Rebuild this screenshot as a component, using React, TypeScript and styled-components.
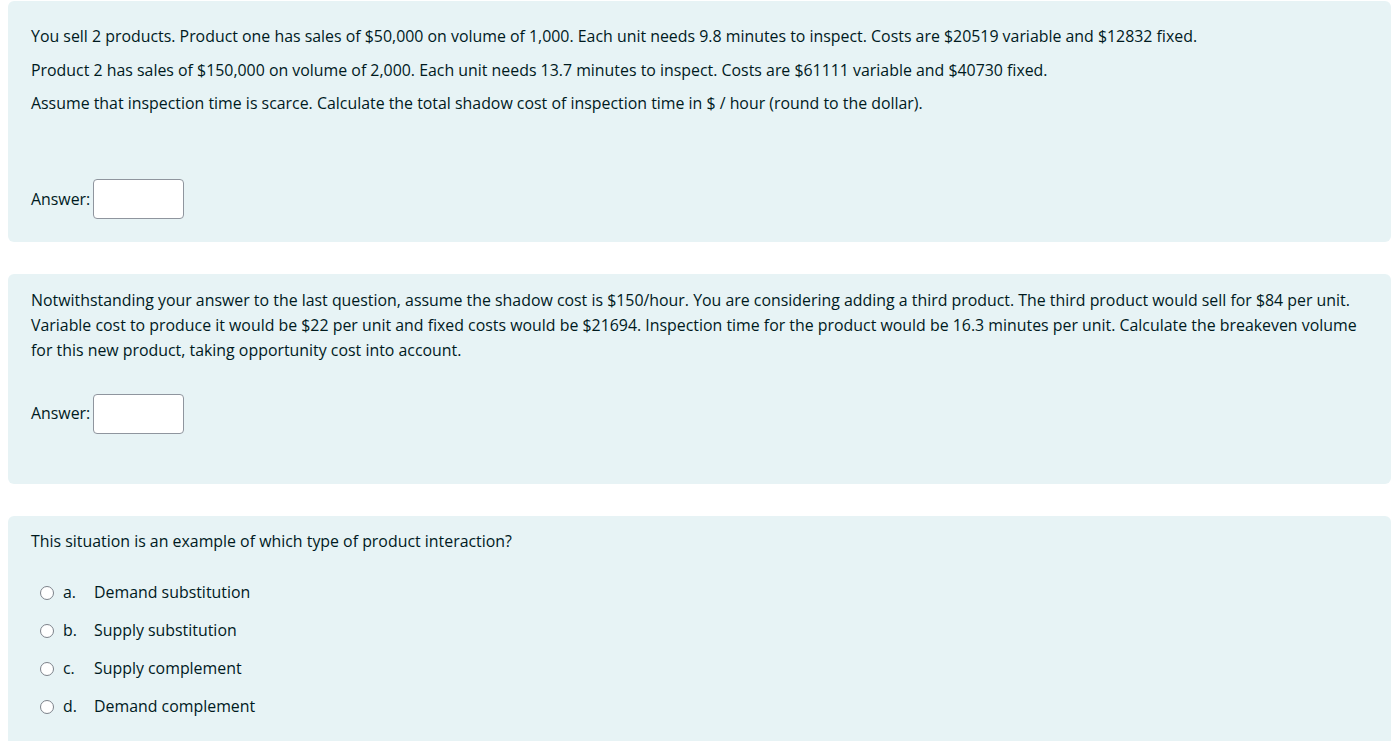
import styled, { createGlobalStyle } from "styled-components"

const GlobalStyle = createGlobalStyle`
  html, body {
    margin: 0;
    padding: 0;
    background: #ffffff;
  }
  body {
    font-family: "Open Sans", "Noto Sans", sans-serif;
    font-size: 15.9px;
    color: #001a1e;
  }
`

const Page = styled.div`
  padding: 1px 2px 0 8px;
  display: flex;
  flex-direction: column;
  gap: 32px;
`

const Card = styled.div<{ $pad: string }>`
  background-color: #e7f3f5;
  border-radius: 6px;
  padding: ${(p) => p.$pad};
`

const Para = styled.p`
  margin: 0 0 8.5px;
  line-height: 25px;
  &:last-child {
    margin-bottom: 0;
  }
`

const QText = styled.div<{ $gap: number }>`
  margin-bottom: ${(p) => p.$gap}px;
`

const AnswerRow = styled.div`
  display: flex;
  align-items: center;
  gap: 3px;
`

const AnswerLabel = styled.label`
  line-height: 25px;
`

const AnswerInput = styled.input`
  width: 91px;
  height: 40px;
  box-sizing: border-box;
  border: 1px solid #8f959e;
  border-radius: 4px;
  background: #ffffff;
  padding: 6px 8px;
  font: inherit;
  &:focus {
    outline: none;
  }
`

const Options = styled.div`
  display: flex;
  flex-direction: column;
  gap: 13px;
  padding-left: 9px;
`

const Option = styled.label`
  display: flex;
  align-items: center;
  line-height: 25px;
`

const Radio = styled.span`
  width: 14px;
  height: 14px;
  box-sizing: border-box;
  border: 1px solid #7d828a;
  border-radius: 50%;
  background: #ffffff;
  margin-right: 9px;
`

const Letter = styled.span`
  width: 31px;
`

const options = [
  ["a.", "Demand substitution"],
  ["b.", "Supply substitution"],
  ["c.", "Supply complement"],
  ["d.", "Demand complement"],
]

export default function App() {
  return (
    <>
      <GlobalStyle />
      <Page>
        <Card $pad="23px 23px 23px">
          <QText $gap={63}>
            <Para>
              You sell 2 products. Product one has sales of $50,000 on volume of 1,000. Each unit needs 9.8 minutes to inspect. Costs are $20519 variable and $12832 fixed.
            </Para>
            <Para>
              Product 2 has sales of $150,000 on volume of 2,000. Each unit needs 13.7 minutes to inspect. Costs are $61111 variable and $40730 fixed.
            </Para>
            <Para>
              Assume that inspection time is scarce. Calculate the total shadow cost of inspection time in $ / hour (round to the dollar).
            </Para>
          </QText>
          <AnswerRow>
            <AnswerLabel htmlFor="a1">Answer:</AnswerLabel>
            <AnswerInput id="a1" type="text" />
          </AnswerRow>
        </Card>

        <Card $pad="13.5px 23px 50px">
          <QText $gap={31}>
            <Para>
              Notwithstanding your answer to the last question, assume the shadow cost is $150/hour. You are considering adding a third product. The third product would sell for $84 per unit. Variable cost to produce it would be $22 per unit and fixed costs would be $21694. Inspection time for the product would be 16.3 minutes per unit. Calculate the breakeven volume for this new product, taking opportunity cost into account.
            </Para>
          </QText>
          <AnswerRow>
            <AnswerLabel htmlFor="a2">Answer:</AnswerLabel>
            <AnswerInput id="a2" type="text" />
          </AnswerRow>
        </Card>

        <Card $pad="13.5px 23px 30px">
          <QText $gap={26}>
            <Para>This situation is an example of which type of product interaction?</Para>
          </QText>
          <Options>
            {options.map(([letter, text]) => (
              <Option key={letter}>
                <Radio />
                <Letter>{letter}</Letter>
                {text}
              </Option>
            ))}
          </Options>
        </Card>
      </Page>
    </>
  )
}
